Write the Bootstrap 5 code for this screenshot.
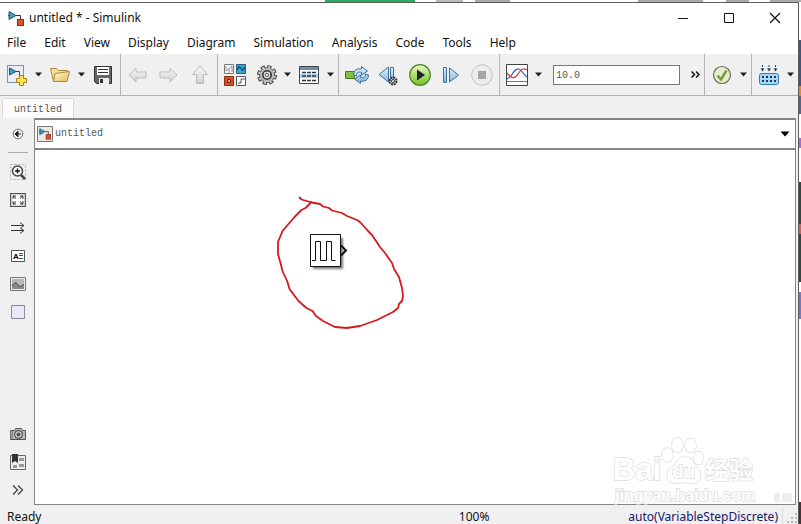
<!DOCTYPE html>
<html lang="en">
<head>
<meta charset="utf-8">
<meta name="viewport" content="width=device-width, initial-scale=1">
<title>untitled * - Simulink</title>
<link href="https://cdn.jsdelivr.net/npm/bootstrap@5.3.0/dist/css/bootstrap.min.css" rel="stylesheet">
<style>
  body { font-family: "Noto Sans", "Open Sans", sans-serif; font-size: 12px; line-height: 18px; color: #111; background: #fff; }
  svg { display: block; flex: none; }
  .desk-top { height: 2px; background: linear-gradient(90deg, transparent 325px, #27ae60 325px, #27ae60 415px, transparent 415px, transparent 436px, #bbb 436px, #bbb 463px, transparent 463px, transparent 475px, #aaa 475px, #aaa 510px, transparent 510px, transparent 638px, #aaa 638px, #aaa 703px, transparent 703px, transparent 726px, #aaa 726px, #aaa 749px, transparent 749px, transparent 770px, #aaa 770px); }
  .desk-side { width: 2px; background: linear-gradient(#fff 38px, #3d5685 38px, #3d5685 84px, #e08a2c 84px, #e08a2c 94px, #52658c 94px, #52658c 112px, #fff 112px, #fff 136px, #a46ae0 136px, #a46ae0 146px, #fff 146px, #fff 180px, #2f4a40 180px, #2f4a40 222px, #d8605a 222px, #d8605a 232px, #2f4a40 232px, #2f4a40 280px, #fff 280px, #fff 290px, #7878c8 290px, #7878c8 317px, #fff 317px, #fff 500px, #463230 500px); }
  .app-window { border-top: 1px solid #5c5c5c; border-right: 1px solid #5c5c5c; background: #f0f0f0; min-width: 0; }
  .title-bar { height: 29px; background: #fff; padding-left: 8px; }
  .title-text { padding-left: 5px; }
  .title-bar button, .tools button, .side-tools button, .path-bar button { border: 0; background: none; padding: 0; color: inherit; }
  .title-bar .win-btn { width: 46px; height: 28px; display: flex; align-items: center; justify-content: center; }
  .menu-bar { height: 22px; background: #fff; padding-left: 7px; gap: 18px; }
  .menu-bar a { color: #111; text-decoration: none; }
  .tools { height: 42px; border-bottom: 1px solid #b4b4b4; }
  .tool-group { padding: 0 6px; gap: 7px; border-right: 1px solid #b4b4b4; }
  .gap-wide { gap: 9px; }
  .pad-end { padding-right: 4px; }
  .tool-group:last-child { border-right: 0; }
  .sim-group { min-width: 0; padding-right: 0; }
  .fixed-text { font-family: "Liberation Mono", monospace; font-size: 10px; color: #555; }
  .stop-time { height: 20px; width: 0; border: 1px solid #777; padding: 2px 2px 0; background: #fff; border-radius: 0; }
  .doc-tabs { height: 22px; padding-left: 2px; padding-top: 2px; }
  .doc-tab { width: 72px; height: 20px; background: #fcfcfc; border: 1px solid #dadada; border-bottom: 0; padding: 2px 0 0; line-height: 16px; }
  .side-tools { width: 34px; padding: 2px 0 1px 2px; }
  .side-tools button { width: 32px; height: 28px; display: flex; align-items: center; justify-content: center; }
  .side-rule { width: 20px; height: 1px; background: #aaa; margin: 4px 0 5px; }
  .editor { border: 1px solid #858585; border-top-width: 2px; margin-right: 2px; background: #fff; min-width: 0; }
  .path-bar { height: 30px; border-bottom: 2px solid #858585; padding: 0 5px 0 2px; gap: 2px; }
  .scribble { left: 235px; top: 40px; }
  .status-bar { height: 19px; padding-left: 7px; padding-top: 4px; }
  .status-main { flex: 8 1 0; }
  .status-zoom { flex: 3 1 0; }
  .solver { color: #16166b; text-decoration: none; }
  .watermark { right: 5px; bottom: 14px; pointer-events: none; }
</style>
<script src="https://cdn.jsdelivr.net/npm/bootstrap@5.3.0/dist/js/bootstrap.bundle.min.js"></script>
</head>
<body>
<svg width="0" height="0" class="position-absolute" aria-hidden="true">
  <defs>
    <linearGradient id="gBlue" x2="0" y2="1"><stop stop-color="#e2f3ff"/><stop offset="1" stop-color="#7fb6de"/></linearGradient>
    <linearGradient id="gGold" x2="1" y2="1"><stop stop-color="#fffbe0"/><stop offset="1" stop-color="#e3bd4c"/></linearGradient>
    <linearGradient id="gGrey" x2="0" y2="1"><stop stop-color="#fafafa"/><stop offset="1" stop-color="#cfcfcf"/></linearGradient>
    <linearGradient id="gGreen" x2="0" y2="1"><stop stop-color="#e9f9c8"/><stop offset="1" stop-color="#72c21c"/></linearGradient>
    <filter id="soft" x="-20%" y="-20%" width="140%" height="140%"><feGaussianBlur stdDeviation="1.2"/></filter>
    <symbol id="drop" viewBox="0 0 7 5"><path d="M0 .5h7L3.500 4.500z" fill="#222"/></symbol>
    <symbol id="model" viewBox="0 0 16 16"><path d="M8 5.500h4.500v4" fill="none" stroke="#333"/><path d="M1 1.500v8l7-4z" fill="#3ba0c8" stroke="#245770"/><path d="M0 5.500h2" stroke="#245770"/><rect x="9.500" y="9.500" width="6" height="6" fill="#d9532c" stroke="#8b2e13"/></symbol>
  </defs>
</svg>
<div class="d-flex flex-column vh-100 overflow-hidden">
  <div class="desk-top flex-shrink-0"></div>
  <div class="d-flex flex-grow-1">
    <div class="app-window d-flex flex-column flex-grow-1 position-relative">
      <header class="title-bar d-flex align-items-center flex-shrink-0">
        <svg width="16" height="16"><use href="#model"/></svg>
        <span class="title-text flex-grow-1">untitled * - Simulink</span>
        <button class="win-btn" aria-label="Minimize"><svg width="12" height="12"><path d="M1 6.500h10" stroke="#111"/></svg></button>
        <button class="win-btn" aria-label="Maximize"><svg width="12" height="12"><path d="M1.500 1.500h9v9h-9z" fill="none" stroke="#111"/></svg></button>
        <button class="win-btn" aria-label="Close"><svg width="12" height="12"><path d="M1 1l10 10M11 1L1 11" stroke="#111" stroke-width="1.200"/></svg></button>
      </header>
      <nav class="menu-bar d-flex align-items-center flex-shrink-0">
        <a href="#">File</a><a href="#">Edit</a><a href="#">View</a><a href="#">Display</a><a href="#">Diagram</a><a href="#">Simulation</a><a href="#">Analysis</a><a href="#">Code</a><a href="#">Tools</a><a href="#">Help</a>
      </nav>
      <div class="tools d-flex flex-shrink-0" role="toolbar">
        <div class="tool-group d-flex align-items-center">
          <button aria-label="New model"><svg width="22" height="22"><rect x="1.500" y="1.500" width="16" height="17" fill="#e9eef3" stroke="#8a929a"/><path d="M3.500 4v7l6.500-3.500z" fill="#3ba0c8" stroke="#245770"/><path d="M10 7.500h3.500v4" stroke="#444" fill="none"/><path d="M13.500 11.500h4v3h3v4h-3v3h-4v-3h-3v-4h3z" fill="#ffe15c" stroke="#a8801c"/></svg></button>
          <button aria-label="New options"><svg width="7" height="5"><use href="#drop"/></svg></button>
          <button aria-label="Open"><svg width="22" height="22"><path d="M1.500 4.500h6l2 2h9v3l-2 8h-12z" fill="#f5df93" stroke="#a78a3c"/><path d="M6 9.500l14.500-2-2.500 10H4.500z" fill="url(#gGold)" stroke="#a78a3c"/></svg></button>
          <button aria-label="Open options"><svg width="7" height="5"><use href="#drop"/></svg></button>
          <button aria-label="Save"><svg width="22" height="22"><path d="M2.500 2.500h17v17h-15l-2-2z" fill="#666" stroke="#333"/><path d="M5 3h12v8H5z" fill="#fff"/><path d="M6 5.500h10M6 8.500h10" stroke="#333"/><path d="M7 14h10v6H7z" fill="#eee"/><path d="M8 15h3v4H8z" fill="#333"/></svg></button>
        </div>
        <div class="tool-group gap-wide d-flex align-items-center">
          <button aria-label="Back"><svg width="22" height="22"><path d="M2 11l7-7v4h10v6H9v4z" fill="url(#gGrey)" stroke="#bdbdbd"/></svg></button>
          <button aria-label="Forward"><svg width="22" height="22"><path d="M19 11l-7-7v4H2v6h10v4z" fill="url(#gGrey)" stroke="#bdbdbd"/></svg></button>
          <button aria-label="Up"><svg width="22" height="22"><path d="M11 2l7.500 8.500h-4v9h-7v-9h-4z" fill="url(#gGrey)" stroke="#bdbdbd"/></svg></button>
        </div>
        <div class="tool-group pad-end d-flex align-items-center">
          <button class="me-1" aria-label="Library browser"><svg width="22" height="22"><path d="M.5.500h9v9h-9z" fill="#fff" stroke="#777"/><path d="M2 2v5l6-5v6M5 5v4" fill="none" stroke="#888"/><path d="M12.500.500h9v9h-9z" fill="#38a3d5" stroke="#28607e"/><path d="M13.500 6c1-5 3-3 4-1s2 2 3-2" fill="none" stroke="#123f5a" stroke-width="1.200"/><path d="M.5 12.500h9v9h-9z" fill="#dc4e25" stroke="#8f3014"/><path d="M3.500 15.500h3v3h-3z" fill="#f6a489" stroke="#74200a"/><path d="M12.500 12.500h9v9h-9z" fill="#fff" stroke="#555"/><path d="M14 19h3v-4h4" fill="none" stroke="#555"/></svg></button>
          <button aria-label="Model settings"><svg width="20" height="22"><circle cx="10" cy="11" r="8" fill="none" stroke="#444" stroke-width="4" stroke-dasharray="4 2.283"/><circle cx="10" cy="11" r="7.500" fill="#bdbdbd" stroke="#555"/><circle cx="10" cy="11" r="7.800" fill="none" stroke="#c4c4c4" stroke-width="2.400" stroke-dasharray="2.200 3.926" stroke-dashoffset="-.9"/><circle cx="10" cy="11" r="4.200" fill="#e4e4e4" stroke="#333" stroke-width="1.600"/><circle cx="10" cy="11" r="1.800" fill="#ddd" stroke="#666"/></svg></button>
          <button aria-label="Settings options"><svg width="7" height="5"><use href="#drop"/></svg></button>
          <button aria-label="Model explorer"><svg width="22" height="22"><path d="M1.500 2.500h19v17h-19z" fill="#fff" stroke="#444"/><path d="M2 3h18v3H2z" fill="#668fb8"/><path d="M2 10h18v4H2z" fill="#add6ee"/><path d="M4 8.500h14M4 12h14M4 16.500h14" stroke="#333" stroke-width="1.500" stroke-dasharray="4 1"/></svg></button>
          <button aria-label="Explorer options"><svg width="7" height="5"><use href="#drop"/></svg></button>
        </div>
        <div class="tool-group gap-wide d-flex align-items-center">
          <button aria-label="Update diagram"><svg width="24" height="22"><path d="M.5 7.500h9v7h-9z" fill="#83bd3d" stroke="#4c7920"/><circle cx="16" cy="11" r="6" fill="#d4eafa"/><path d="M8.500 11c0-5 4-7 8-6V2.500l6 4.500-6 4V8.500c-3-1-5 0-5 3.500zM23.500 11c0 5-4 7-8 6v2.500L9.500 15l6-4v2.500c3 1 5 0 5-3.500z" fill="url(#gBlue)" stroke="#3c6d95"/></svg></button>
          <button aria-label="Step back"><svg width="22" height="22"><path d="M1 10.500L10.500 3v15z" fill="url(#gBlue)" stroke="#3f6f98"/><path d="M12.500 3.500h3v13h-3z" fill="url(#gBlue)" stroke="#3f6f98"/><circle cx="15" cy="17" r="3.500" fill="#ddd" stroke="#333" stroke-width="2" stroke-dasharray="2 .7"/><circle cx="15" cy="17" r="1.500" fill="#fff" stroke="#333"/></svg></button>
          <button aria-label="Run"><svg width="22" height="22"><circle cx="11" cy="11" r="10.300" fill="url(#gGreen)" stroke="#52812a" stroke-width="1.200"/><path d="M8 5.500v11l8-5.500z" fill="#222"/></svg></button>
          <button aria-label="Step forward"><svg width="22" height="22"><path d="M3.500 3.500h3v15h-3z" fill="url(#gBlue)" stroke="#3f6f98"/><path d="M18.500 11L9.500 4v14z" fill="url(#gBlue)" stroke="#3f6f98"/></svg></button>
          <button aria-label="Stop"><svg width="22" height="22"><circle cx="11" cy="11" r="10.300" fill="#ececec" stroke="#c2c2c2"/><path d="M7 7h8v8H7z" fill="#a5a5a5"/></svg></button>
        </div>
        <div class="tool-group sim-group d-flex align-items-center flex-grow-1">
          <button aria-label="Scope"><svg width="22" height="22"><path d="M.5.500h21v21H.5z" fill="#fff" stroke="#444"/><path d="M1 15l4-3C8 7 10 4 13 5s4 5 8 8" fill="none" stroke="#3970bd" stroke-width="1.300"/><path d="M1 9c4 5 7 7 11 1s5-6 9-4" fill="none" stroke="#d13c46" stroke-width="1.300"/><path d="M1 17.500h20" stroke="#777"/></svg></button>
          <button class="me-1" aria-label="Scope options"><svg width="7" height="5"><use href="#drop"/></svg></button>
          <input class="stop-time fixed-text flex-grow-1" type="text" value="10.0" aria-label="Stop time">
          <button class="ms-1 me-1" aria-label="More tools"><svg width="9" height="9"><path d="M.5 1.500l3 3-3 3M5 1.500l3 3-3 3" fill="none" stroke="#111" stroke-width="1.500"/></svg></button>
        </div>
        <div class="tool-group pad-end d-flex align-items-center">
          <button aria-label="Advisor"><svg width="22" height="22"><circle cx="11" cy="11" r="8.500" fill="#e6edcf" stroke="#667058" stroke-width="1.200"/><path d="M6.500 11.500l3.500 4 5.500-9" fill="none" stroke="#719e37" stroke-width="2.500"/></svg></button>
          <button aria-label="Advisor options"><svg width="7" height="5"><use href="#drop"/></svg></button>
        </div>
        <div class="tool-group pad-end d-flex align-items-center">
          <button aria-label="Build"><svg width="22" height="22"><path d="M4.500 1v5M11 1v5M17.500 1v5" stroke="#28445e" stroke-dasharray="2 1"/><path d="M2.500 4.500h4l-2 3zM9 4.500h4l-2 3zM15.500 4.500h4l-2 3z" fill="#28445e"/><rect x="1.500" y="9.500" width="19" height="11" rx="2" fill="#a8d7f6" stroke="#347aaa"/><path d="M4 13h15M4 17h15" stroke="#163b5e" stroke-width="2" stroke-dasharray="2 2"/></svg></button>
          <button aria-label="Build options"><svg width="7" height="5"><use href="#drop"/></svg></button>
        </div>
      </div>
      <div class="doc-tabs flex-shrink-0"><button class="doc-tab fixed-text">untitled</button></div>
      <main class="d-flex flex-grow-1">
        <div class="side-tools d-flex flex-column align-items-center flex-shrink-0">
          <button aria-label="Hide browser"><svg width="12" height="12"><circle cx="6" cy="6" r="4.800" fill="#f7f7f7" stroke="#666"/><path d="M9 6H4M6 3L3 6l3 3z" stroke="#222" fill="#222"/></svg></button>
          <div class="side-rule"></div>
          <button aria-label="Zoom"><svg width="16" height="16"><path d="M.5.500h15v15H.5z" fill="none" stroke="#aaa" stroke-dasharray="2 2"/><circle cx="7.500" cy="7" r="5" fill="#fff" stroke="#444" stroke-width="1.500"/><path d="M5 7h5M7.500 4.500v5" stroke="#111" stroke-width="1.400"/><path d="M11 11l4 4" stroke="#444" stroke-width="2.500"/></svg></button>
          <button aria-label="Fit to view"><svg width="16" height="14"><path d="M.5.500h15v13H.5z" fill="#fff" stroke="#555" stroke-width="1.500"/><path d="M6 5.500L3 3M3 6V3h3M10 5.500L13 3M10 3h3v3M6 8.500L3 11M3 8v3h3M10 8.500l3 2.500M10 11h3V8" fill="none" stroke="#333"/></svg></button>
          <button aria-label="Sample time"><svg width="16" height="12"><path d="M1 3.500h12M1 8.500h12" stroke="#333"/><path d="M10 .5l4 3-3 2.500M10 6l4 2.500-4 3" fill="none" stroke="#444"/></svg></button>
          <button aria-label="Annotation"><svg width="14" height="12" font-family="Liberation Sans" font-size="8" font-weight="bold"><path d="M.5.500h13v11H.5z" fill="#fff" stroke="#555"/><text x="2" y="9">A</text><path d="M8 3.500h4M8 5.500h4M8 8.500h4" stroke="#444"/></svg></button>
          <button aria-label="Image"><svg width="16" height="14"><path d="M.5.500h15v13H.5z" fill="#eee" stroke="#777"/><path d="M2 2h12v10H2z" fill="#b7b7b7"/><path d="M2 9c3-5 5-3 6-1s3 2 6-1v5H2z" fill="#888"/><path d="M2 9c3-5 5-3 6-1s3 2 6-1" fill="none" stroke="#444"/></svg></button>
          <button aria-label="Area"><svg width="14" height="14"><path d="M.5.500h13v13H.5z" fill="#e9e8fb" stroke="#8a8a9a"/></svg></button>
          <button class="mt-auto" aria-label="Screenshot"><svg width="16" height="12"><path d="M.5 2.500h4l1-2h6l1 2h3v9H.5z" fill="#bbb" stroke="#555"/><path d="M1 3v8M2.500 3v8" stroke="#888"/><circle cx="8.500" cy="6.500" r="4" fill="#ccc" stroke="#333"/><circle cx="8.500" cy="6.500" r="2" fill="#555"/></svg></button>
          <button aria-label="Bookmarks"><svg width="16" height="16"><path d="M.5 1.500h15v14H.5z" fill="#eee" stroke="#666"/><path d="M9 4h5v3H9zM9 10h5v3H9zM3 11h4v3H3z" fill="#999"/><path d="M2 0h6v9L5 7 2 9z" fill="#333"/></svg></button>
          <button aria-label="More"><svg width="12" height="10"><path d="M1 .5L5.500 5 1 9.500M6 .5L10.500 5 6 9.500" fill="none" stroke="#444" stroke-width="1.300"/></svg></button>
        </div>
        <div class="editor d-flex flex-column flex-grow-1">
          <div class="path-bar d-flex align-items-center flex-shrink-0 fixed-text">
            <svg width="16" height="16"><path d="M.5.500h15v15H.5z" fill="#f0e7e2" stroke="#777"/><use href="#model" x="2" y="1" width="12" height="13"/></svg>
            <span class="flex-grow-1">untitled</span>
            <button aria-label="Model path"><svg width="10" height="6"><path d="M.5.500h9L5 5.500z" fill="#000"/></svg></button>
          </div>
          <div class="flex-grow-1 position-relative bg-white">
            <svg class="scribble position-absolute" width="140" height="145" viewBox="270 190 140 145">
              <path d="M313 238h30v31h-30z" fill="#777" filter="url(#soft)"/>
              <path d="M310.500 234.500h30v32h-30z" fill="#fff" stroke="#111"/>
              <path d="M312 260.500h3.500v-19h5v19h6v-19h5v19h4" fill="none" stroke="#111"/>
              <path d="M341 245.500l5 5-5 5" fill="none" stroke="#111" stroke-width="2"/>
              <path d="M299.500 197.500l2 2 10.500 3 8 1.500 3 2.500 6 1.500 3 2.500 10 2.500 5 3 10 4 4 3 7 8 4 4 8 12 5 6 7 10 2 6 5 8 3 11 1 8-1 5-3 3-1 4-5 4-16 8-17 6-13 2-12-1-12-6-7-5-3.500-5-6-3-8-7-9-12-2-7-5-11-2-8-2.500-9v-12l4.500-11 12-14 7-7 4-2 6-6" fill="none" stroke="#d8181c" stroke-width="1.800" stroke-linejoin="round" stroke-linecap="round"/>
            </svg>
          </div>
        </div>
      </main>
      <footer class="status-bar d-flex align-items-center flex-shrink-0">
        <span class="status-main">Ready</span>
        <span class="status-zoom">100%</span>
        <a class="solver" href="#">auto(VariableStepDiscrete)</a>
        <svg class="ms-1" width="16" height="18"><path d="M.5 0v18" stroke="#ddd"/><path d="M13 5h2v2h-2zM9 9h2v2H9zM13 9h2v2h-2zM5 13h2v2H5zM9 13h2v2H9zM13 13h2v2h-2z" fill="#bbb"/></svg>
      </footer>
      <svg class="watermark position-absolute" width="182" height="76" viewBox="612 435 182 76" fill="#fff" stroke="#dcdcdc" stroke-width="1.400" paint-order="stroke" aria-hidden="true">
        <g font-family="Liberation Sans, Noto Sans CJK SC, sans-serif" font-weight="bold">
          <text x="614" y="481" font-size="31">Bai</text>
          <ellipse cx="678.500" cy="446" rx="5.500" ry="7.500"/><ellipse cx="691.500" cy="446.500" rx="5.500" ry="7"/><ellipse cx="668.500" cy="456" rx="5.500" ry="7"/><ellipse cx="699.500" cy="459" rx="5" ry="6.500"/>
          <path d="M686 458c8 0 8 7 12 11s6 15-3 15c-5 0-14-1-20 0-9-1-8-12-2-16s5-10 13-10z"/>
          <text x="673" y="479" font-size="19">du</text>
          <text x="706" y="480" font-size="24" font-family="Noto Sans CJK SC">经验</text>
          <text x="616" y="502" font-size="16">jingyan.baidu.com</text>
        </g>
        <path d="M775 494h6v9h-6zM783 494h10v9h-10z" fill="#eee" stroke="none"/>
      </svg>
    </div>
    <div class="desk-side flex-shrink-0"></div>
  </div>
</div>
</body>
</html>
